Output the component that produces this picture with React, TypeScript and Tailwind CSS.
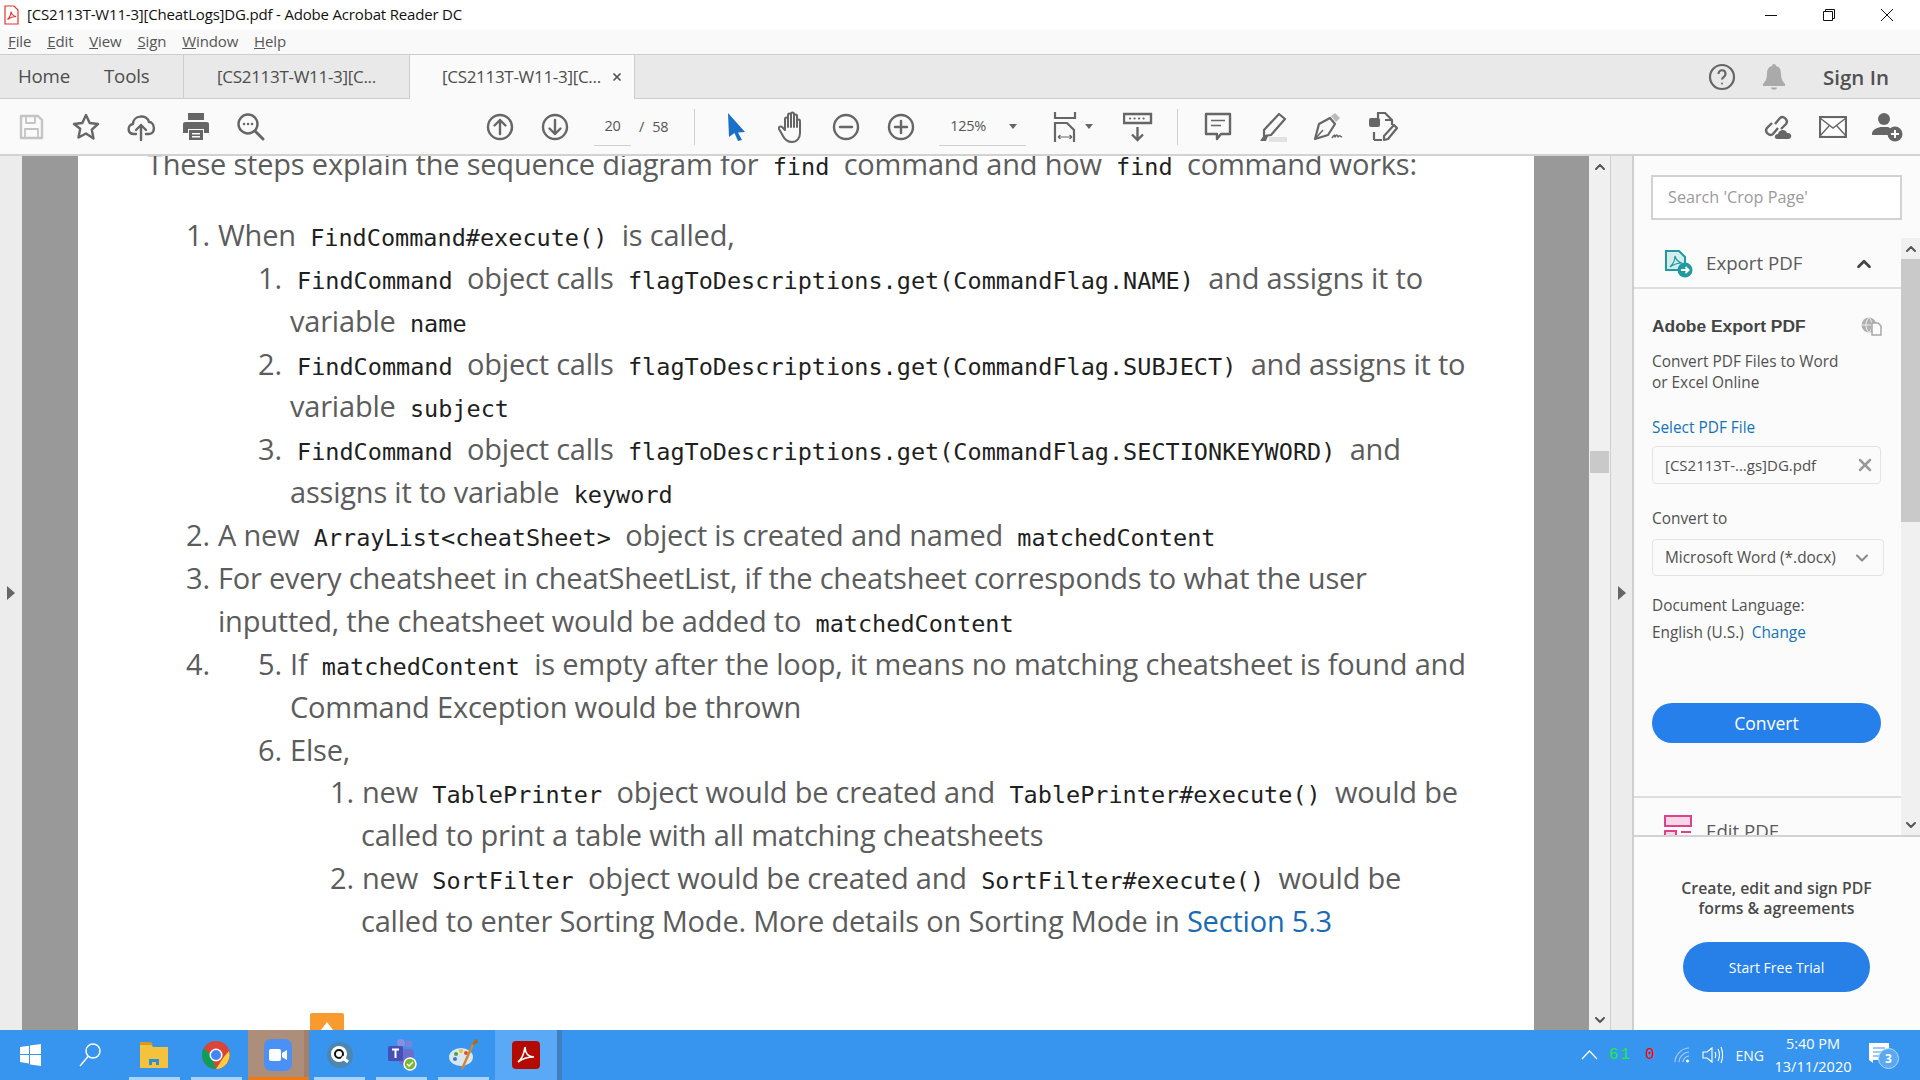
import { ReactNode } from 'react'
import { ChevronUp, ChevronDown, X } from 'lucide-react'

const ui = 'font-["Open_Sans",sans-serif]'

function C({ children }: { children: ReactNode }) {
  return <code className='mx-[7px] font-["DejaVu_Sans_Mono",monospace] text-[23.5px] tracking-normal text-[#1f1f1f]'>{children}</code>
}

function Line({ indent, children }: { indent: number; children: ReactNode }) {
  return (
    <div className="h-[42.9px] whitespace-nowrap leading-[42.9px]" style={{ paddingLeft: indent }}>
      {children}
    </div>
  )
}

function Num({ n, w }: { n: string; w: number }) {
  return (
    <span className="inline-block" style={{ width: w }}>
      {n}
    </span>
  )
}

function Tool({ children, w = 55 }: { children: ReactNode; w?: number }) {
  return (
    <div className="flex h-full shrink-0 items-center justify-center" style={{ width: w }}>
      {children}
    </div>
  )
}

function Svg({ children, s = 30, color = '#666' }: { children: ReactNode; s?: number; color?: string }) {
  return (
    <svg width={s} height={s} viewBox="0 0 30 30" fill="none" stroke={color} strokeWidth="2.4" strokeLinecap="round" strokeLinejoin="round">
      {children}
    </svg>
  )
}

function Sep() {
  return <div className="h-[36px] w-px shrink-0 bg-[#cfcfcf]" />
}

function Task({ children, active, bar = true, className = '' }: { children: ReactNode; active?: boolean; bar?: boolean; className?: string }) {
  return (
    <div className={`relative flex h-full w-[61.8px] shrink-0 items-center justify-center ${className}`}>
      {children}
      {bar && !active && <div className="absolute bottom-0 left-[5px] h-[3px] w-[51px] bg-[#a9d3f8]" />}
    </div>
  )
}

function PageText() {
  return (
    <div className={`-mt-[13px] text-[29px] tracking-[-0.2px] text-[#5c5c5c] ${ui}`}>
      <Line indent={69}>
        These steps explain the sequence diagram for <C>find</C> command and how <C>find</C> command works:
      </Line>
      <div className="h-[28px]" />
      <Line indent={108}>
        <Num n="1." w={32} />When <C>FindCommand#execute()</C> is called,
      </Line>
      <Line indent={180}>
        <Num n="1." w={32} /><C>FindCommand</C> object calls <C>flagToDescriptions.get(CommandFlag.NAME)</C> and assigns it to
      </Line>
      <Line indent={212}>
        variable <C>name</C>
      </Line>
      <Line indent={180}>
        <Num n="2." w={32} /><C>FindCommand</C> object calls <C>flagToDescriptions.get(CommandFlag.SUBJECT)</C> and assigns it to
      </Line>
      <Line indent={212}>
        variable <C>subject</C>
      </Line>
      <Line indent={180}>
        <Num n="3." w={32} /><C>FindCommand</C> object calls <C>flagToDescriptions.get(CommandFlag.SECTIONKEYWORD)</C> and
      </Line>
      <Line indent={212}>
        assigns it to variable <C>keyword</C>
      </Line>
      <Line indent={108}>
        <Num n="2." w={32} />A new <C>ArrayList&lt;cheatSheet&gt;</C> object is created and named <C>matchedContent</C>
      </Line>
      <Line indent={108}>
        <Num n="3." w={32} />For every cheatsheet in cheatSheetList, if the cheatsheet corresponds to what the user
      </Line>
      <Line indent={140}>
        inputted, the cheatsheet would be added to <C>matchedContent</C>
      </Line>
      <Line indent={108}>
        <Num n="4." w={72} /><Num n="5." w={32} />If <C>matchedContent</C> is empty after the loop, it means no matching cheatsheet is found and
      </Line>
      <Line indent={212}>Command Exception would be thrown</Line>
      <Line indent={180}>
        <Num n="6." w={32} />Else,
      </Line>
      <Line indent={252}>
        <Num n="1." w={32} />new <C>TablePrinter</C> object would be created and <C>TablePrinter#execute()</C> would be
      </Line>
      <Line indent={283}>called to print a table with all matching cheatsheets</Line>
      <Line indent={252}>
        <Num n="2." w={32} />new <C>SortFilter</C> object would be created and <C>SortFilter#execute()</C> would be
      </Line>
      <Line indent={283}>
        called to enter Sorting Mode. More details on Sorting Mode in <span className="text-[#1a6bb3]">Section 5.3</span>
      </Line>
    </div>
  )
}

function RightPanel() {
  return (
    <div className={`relative flex w-[288px] shrink-0 flex-col border-l-2 border-[#cfcfcf] bg-[#fbfbfb] text-[#505050] ${ui}`}>
      <div className="px-[16px] pt-[19px] pb-[18px]">
        <div className="ml-[1px] flex h-[45px] w-[251px] items-center border-2 border-[#d2d2d2] bg-white pl-[15px] text-[16.2px] text-[#9a9a9a]">
          Search 'Crop Page'
        </div>
      </div>
      <div className="flex h-[597px] overflow-hidden">
        <div className="w-[267px] shrink-0 overflow-hidden">
          <div className="flex h-[51px] items-center border-b-2 border-[#dedede] pt-[2px] pr-[26px] pl-[30px]">
            <svg width="29" height="28" viewBox="0 0 29 28" fill="none">
              <path d="M2 1h13l6 6v13H2z" fill="#d5ecec" stroke="#1f9a9d" strokeWidth="2" />
              <path d="M6 17c3-3 5-7 5-11 1 4 3 6 7 7-4 0-8 1-12 4z" stroke="#1f9a9d" strokeWidth="1.2" />
              <circle cx="21" cy="20" r="7.5" fill="#1f9a9d" />
              <path d="M17 20h7M21.5 17l3 3-3 3" stroke="#fff" strokeWidth="2" />
            </svg>
            <span className="ml-[13px] flex-1 text-[18.7px] text-[#5a5a5a]">Export PDF</span>
            <ChevronUp className="size-[22px] text-[#444]" strokeWidth={3} />
          </div>
          <div className="pl-[18px]">
            <div className="mt-[26px] flex h-[22px] w-[230px] items-center justify-between">
              <span className='font-["Liberation_Sans",sans-serif] text-[17.4px] font-bold text-[#444]'>Adobe Export PDF</span>
              <svg width="21" height="19" viewBox="0 0 21 19" fill="none">
                <circle cx="8" cy="8" r="7.500" fill="#b0b0b0" />
                <path d="M.5 8h15M8 .5c-4 4-4 11 0 15M8 .5c4 4 4 11 0 15" stroke="#f5f5f5" strokeWidth="0.9" />
                <path d="M11 6h6l3 3v9h-9z" fill="#fbfbfb" stroke="#a8a8a8" strokeWidth="1.5" />
              </svg>
            </div>
            <p className="mt-[14px] text-[15.4px] leading-[21px]">
              Convert PDF Files to Word
              <br />
              or Excel Online
            </p>
            <div className="mt-[24px] text-[15.4px] leading-[21px] text-[#1473b8]">Select PDF File</div>
            <div className="mt-[8px] flex h-[38px] w-[229px] items-center justify-between rounded-[4px] border border-[#e3e3e3] pr-[5px] pl-[12px] text-[15px]">
              [CS2113T-...gs]DG.pdf
              <X className="size-[20px] text-[#9a9a9a]" strokeWidth={3} />
            </div>
            <div className="mt-[24px] text-[15.4px] leading-[21px]">Convert to</div>
            <div className="mt-[10px] flex h-[37px] w-[232px] items-center justify-between rounded-[4px] border border-[#e3e3e3] pr-[11px] pl-[12px] text-[15.4px]">
              Microsoft Word (*.docx)
              <ChevronDown className="size-[20px] text-[#8a8a8a]" strokeWidth={2.5} />
            </div>
            <div className="mt-[19px] text-[15.4px] leading-[21px]">Document Language:</div>
            <div className="mt-[6px] text-[15.4px] leading-[21px]">
              English (U.S.) <span className="ml-[4px] text-[#1473b8]">Change</span>
            </div>
            <div className="mt-[60px] flex h-[40px] w-[229px] items-center justify-center rounded-full bg-[#2680eb] text-[17.6px] text-white">
              Convert
            </div>
          </div>
          <div className="mt-[53px] flex items-start border-t-2 border-[#dedede] pt-[17px] pl-[30px]">
            <svg width="28" height="26" viewBox="0 0 28 26" fill="none" stroke="#e0418f" strokeWidth="2">
              <rect x="1" y="1" width="26" height="10" fill="#f7d6e6" />
              <rect x="1" y="16" width="11" height="9" fill="#f7d6e6" />
              <path d="M17 17h10" />
            </svg>
            <span className="ml-[14px] mt-[2px] text-[18.7px] text-[#5a5a5a]">Edit PDF</span>
          </div>
        </div>
        <div className="flex w-[19px] shrink-0 flex-col bg-[#f0f0f0]">
          <div className="flex h-[21px] items-center justify-center">
            <ChevronUp className="size-[16px] text-[#555]" strokeWidth={3} />
          </div>
          <div className="h-[263px] bg-[#c9c9c9]" />
          <div className="flex-1" />
          <div className="flex h-[21px] items-center justify-center">
            <ChevronDown className="size-[16px] text-[#555]" strokeWidth={3} />
          </div>
        </div>
      </div>
      <div className="flex flex-1 flex-col items-center border-t-2 border-[#d2d2d2] bg-[#fcfcfc] pr-[1px]">
        <p className="mt-[41px] text-center text-[15.8px] leading-[20px] font-semibold text-[#4a4a4a]">
          Create, edit and sign PDF
          <br />
          forms &amp; agreements
        </p>
        <div className="mt-[24px] flex h-[50px] w-[187px] items-center justify-center rounded-full bg-[#2680e8] text-[14px] text-white">
          Start Free Trial
        </div>
      </div>
    </div>
  )
}

export default function App() {
  return (
    <div className="relative flex h-[1080px] w-[1920px] flex-col overflow-hidden bg-white">
      {/* Title bar */}
      <div className='flex h-[30px] shrink-0 items-center bg-white pb-[1px] font-["Open_Sans",sans-serif] text-[15px] text-[#111]'>
        <svg className="ml-[4px]" width="15" height="20" viewBox="0 0 15 20" fill="none">
          <path d="M1 1h9l4 4v14H1z" fill="#fff" stroke="#e5332a" strokeWidth="1.2" />
          <path d="M3.500 14.500c2-2 3.500-5 3.500-8 .5 3 2.500 4.500 5 5-3 0-6 1-8.500 3z" stroke="#e5332a" strokeWidth="1.1" />
        </svg>
        <span className="ml-[8px] tracking-[-0.18px]">[CS2113T-W11-3][CheatLogs]DG.pdf - Adobe Acrobat Reader DC</span>
        <div className="ml-auto flex h-full pr-[4px]">
          <div className="flex w-[58px] items-center justify-center">
            <svg width="12" height="12" viewBox="0 0 12 12" stroke="#111" fill="none"><path d="M0 6.500h12" /></svg>
          </div>
          <div className="flex w-[58px] items-center justify-center">
            <svg width="12" height="12" viewBox="0 0 12 12" stroke="#111" fill="none"><path d="M.5 2.500h9v9h-9zM2.500 2.500v-2h9v9h-2" /></svg>
          </div>
          <div className="flex w-[58px] items-center justify-center">
            <svg width="14" height="14" viewBox="0 0 14 14" stroke="#111" fill="none"><path d="M1 1l12 12M13 1L1 13" /></svg>
          </div>
        </div>
      </div>
      {/* Menu bar */}
      <div className={`flex h-[24px] shrink-0 items-center gap-[15.8px] bg-[#f9f9f9] pb-[1px] pl-[8px] text-[15px] tracking-[-0.1px] text-[#555] ${ui}`}>
        <span><u>F</u>ile</span>
        <span><u>E</u>dit</span>
        <span><u>V</u>iew</span>
        <span><u>S</u>ign</span>
        <span><u>W</u>indow</span>
        <span><u>H</u>elp</span>
      </div>
      {/* Tab bar */}
      <div className={`flex h-[45px] shrink-0 items-stretch border-y border-[#cdcdcd] bg-[#e9e9e9] text-[#4d4d4d] ${ui}`}>
        <div className="flex w-[183px] items-center gap-[34px] pl-[18px] text-[18.7px] tracking-[-0.2px]">
          <span>Home</span>
          <span>Tools</span>
        </div>
        <div className="flex w-[226px] items-center justify-center border-l border-[#cdcdcd] text-[17px] tracking-[-0.3px]">[CS2113T-W11-3][C...</div>
        <div className="-mb-px flex w-[226px] items-center justify-between border-x border-[#cdcdcd] bg-[#fafafa] pr-[11px] pl-[32px] text-[17px] tracking-[-0.3px]">
          [CS2113T-W11-3][C...
          <X className="size-[12px] text-[#555]" strokeWidth={3.5} />
        </div>
        <div className="ml-auto flex items-center">
          <svg width="28" height="28" viewBox="0 0 28 28" fill="none" stroke="#666" strokeWidth="2.200">
            <circle cx="14" cy="14" r="12" />
            <path d="M10.500 11c0-5 7-5 7 0 0 3-3.500 3-3.500 5.500" />
            <circle cx="14" cy="20.500" r="1" fill="#666" stroke="none" />
          </svg>
          <svg className="ml-[27px]" width="22" height="26" viewBox="0 0 22 26" fill="#aaa">
            <path d="M11 0c1.500 0 2 1 2 2 4 1 5 4 5 8 0 5 2 8 4 10v2H0v-2c2-2 4-5 4-10 0-4 1-7 5-8 0-1 .5-2 2-2zM8 23.500h6c0 3-6 3-6 0z" />
          </svg>
          <span className="mt-[2px] mr-[31px] ml-[38px] text-[20.5px] font-semibold text-[#505050]">Sign In</span>
        </div>
      </div>
      {/* Toolbar */}
      <div className={`flex h-[57px] shrink-0 items-center border-b-2 border-[#d2d2d2] bg-[#fafafa] text-[#555] ${ui}`}>
        <div className="flex h-full pl-[3px]">
          <Tool>
            <Svg color="#c4c4c4">
              <path d="M5 4h17l4 4v18H5z" />
              <path d="M10 4v7h9V4M9 26v-9h13v9" strokeWidth="1.800" />
            </Svg>
          </Tool>
          <Tool>
            <Svg>
              <path d="M15 3l3.700 8 8.300 1-6.200 5.700 1.700 8.800L15 21.500l-7.500 4 1.700-8.800L3 12l8.300-1z" />
            </Svg>
          </Tool>
          <Tool>
            <Svg>
              <path d="M10 22H8c-7 0-7-9-1-10 0-9 14-10 16-2 6 0 7 12 0 12h-3" />
              <path d="M15 28V13M10 18l5-5 5 5" />
            </Svg>
          </Tool>
          <Tool>
            <svg width="26" height="27" viewBox="0 0 26 27" fill="#666">
              <path d="M5 0h16v7H5z" />
              <path d="M2 9h22a2 2 0 012 2v9h-5v-4H5v4H0v-9a2 2 0 012-2z" />
              <path d="M6 17h14v10H6zM9 20v1.500h8V20zM9 23v1.500h8V23z" fillRule="evenodd" />
            </svg>
          </Tool>
          <Tool>
            <Svg>
              <circle cx="12" cy="12" r="9.500" />
              <path d="M19 19l8 8" strokeWidth="3" />
              <path d="M8 12h.1M12 12h.1M16 12h.1" />
            </Svg>
          </Tool>
        </div>
        <div className="ml-[194px] flex h-full">
          <Tool>
            <Svg>
              <circle cx="15" cy="15" r="12" />
              <path d="M15 22V8M9.500 13.500L15 8l5.500 5.500" />
            </Svg>
          </Tool>
          <Tool>
            <Svg>
              <circle cx="15" cy="15" r="12" />
              <path d="M15 8v14M9.500 16.500L15 22l5.500-5.500" />
            </Svg>
          </Tool>
        </div>
        <div className="ml-[12px] flex h-[38px] w-[37px] items-center justify-center border-b border-[#cfcfcf] text-[14.5px] tracking-[-0.3px]">20</div>
        <span className="ml-[8px] text-[14.5px]">/</span>
        <span className="ml-[8px] text-[14.5px] tracking-[-0.3px]">58</span>
        <div className="ml-[26px]"><Sep /></div>
        <div className="ml-[13px] flex h-full">
          <Tool>
            <svg width="20" height="28" viewBox="0 0 20 28" fill="#1a70c8">
              <path d="M2 0l17 19-7 .5 4 7.500-4 1-3.500-8L3 24z" />
            </svg>
          </Tool>
          <Tool>
            <svg className="ml-[3px]" width="28" height="32" viewBox="0 0 28 32" fill="none" stroke="#666" strokeWidth="2" strokeLinejoin="round" strokeLinecap="round">
              <path d="M7 19V8c0-2 3-2 3 0v8V4c0-2 3-2 3 0v12V3c0-2 3-2 3 0v13V5c0-2 3-2 3 0v11-6c0-2 3-2 3 0v12c0 5-3 9-8 9-5 0-7-2-9-6l-4-7c-1-2 2-4 4-1z" />
            </svg>
          </Tool>
          <Tool>
            <Svg>
              <circle cx="15" cy="15" r="12" />
              <path d="M9 15h12" />
            </Svg>
          </Tool>
          <Tool>
            <Svg>
              <circle cx="15" cy="15" r="12" />
              <path d="M9 15h12M15 9v12" />
            </Svg>
          </Tool>
        </div>
        <div className="ml-[11px] flex h-[38px] w-[87px] items-center justify-between border-b border-[#cfcfcf] pr-[9px] pl-[11px] text-[14.5px] tracking-[-0.3px]">
          125%
          <span className="h-0 w-0 border-x-[4px] border-t-[5px] border-x-transparent border-t-[#666]" />
        </div>
        <div className="ml-[27px] flex h-full items-center gap-[6px]">
          <svg width="26" height="30" viewBox="0 0 26 30" fill="none" stroke="#666" strokeWidth="2.200">
            <path d="M2 0v6h20V0" />
            <path d="M2 30V11h12l7 7v12" />
            <path d="M5 25h14M5 25l2.500-2M5 25l2.500 2M19 25l-2.500-2M19 25l-2.500 2" strokeWidth="1.200" />
          </svg>
          <span className="h-0 w-0 border-x-[4px] border-t-[5px] border-x-transparent border-t-[#666]" />
        </div>
        <div className="ml-[17px] flex h-full">
          <Tool>
            <svg width="30" height="30" viewBox="0 0 30 30" fill="none">
              <path d="M1 2h27v9H1z" stroke="#666" strokeWidth="2.400" fill="#fafafa" />
              <path d="M7 6.500h.1M11.500 6.500h.1M16 6.500h.1M20.500 6.500h.1" stroke="#666" strokeWidth="2.200" strokeLinecap="round" />
              <path d="M14.500 15v13M9 22.500l5.500 5.500 5.500-5.500" stroke="#666" strokeWidth="2.400" />
            </svg>
          </Tool>
        </div>
        <div className="ml-[12px]"><Sep /></div>
        <div className="ml-[12px] flex h-full">
          <Tool>
            <svg width="28" height="30" viewBox="0 0 28 30" fill="none" stroke="#666" strokeWidth="2.400" strokeLinejoin="round">
              <path d="M2 2h24v20H17l-4 5v-5H2z" />
              <path d="M7 8.500h14M7 13.500h10" strokeWidth="1.500" />
            </svg>
          </Tool>
          <Tool>
            <svg width="32" height="30" viewBox="0 0 32 30" fill="none">
              <path d="M22 2l6 5-14 16-7 1 0-6z" stroke="#666" strokeWidth="2.200" strokeLinejoin="round" />
              <path d="M3 29l4-6 4 1-2 5z" fill="#666" />
              <path d="M12 25h18v5H12z" fill="#e2e2e2" />
            </svg>
          </Tool>
          <Tool>
            <svg width="32" height="30" viewBox="0 0 32 30" fill="none" stroke="#666" strokeWidth="2.200" strokeLinejoin="round">
              <path d="M7 12L18 6l5 6-7 11-13 4z" />
              <path d="M3 27l8-9" strokeWidth="1.500" />
              <path d="M19 4l4-3 5 5-4 4z" fill="#bbb" stroke="none" />
              <path d="M20 26c2-3 3-4 3-1 2-3 2-2 3 0 1-2 2-1 4 0" strokeWidth="1.500" />
            </svg>
          </Tool>
          <Tool>
            <svg width="30" height="30" viewBox="0 0 30 30" fill="none" stroke="#666" strokeWidth="2.200" strokeLinejoin="round">
              <path d="M9 1h8l7 7v5M10 8V1M6 28v-8M6 28h8M17 8h7" />
              <rect x="1" y="6" width="11" height="9" rx="2" fill="#666" stroke="none" />
              <path d="M26 13l3 3-9 11-4 1 0-4z" />
            </svg>
          </Tool>
        </div>
        <div className="ml-auto flex h-full pr-[5px]">
          <Tool>
            <svg width="32" height="30" viewBox="0 0 32 30" fill="none" stroke="#666" strokeWidth="2.400">
              <path d="M13 12l5-6c3-3 9 2 6 6l-5 5M16 16l-5 6c-3 3-9-2-6-6l5-5" />
              <path d="M15 27c-3 0-3-5 1-5 1-5 8-5 9-1 5-1 6 6 1 6z" fill="#666" stroke="none" />
            </svg>
          </Tool>
          <Tool>
            <svg width="28" height="22" viewBox="0 0 28 22" fill="#fff" stroke="#666" strokeWidth="2.200">
              <rect x="1" y="1" width="26" height="20" />
              <path d="M1 2l13 10 13-10M1 20l9-10M27 20l-9-10" fill="none" strokeWidth="1.400" />
            </svg>
          </Tool>
          <Tool>
            <svg width="31" height="30" viewBox="0 0 31 30">
              <circle cx="12" cy="7" r="6" fill="#666" />
              <path d="M0 22c0-5 6-6 8-7h8c2 1 4 2 5 3-3 1-5 3-5 5H0z" fill="#666" />
              <circle cx="23" cy="22" r="7.500" fill="#666" />
              <path d="M19 22h8M23 18v8" stroke="#fff" strokeWidth="2" />
            </svg>
          </Tool>
        </div>
      </div>
      {/* Main area */}
      <div className="flex h-[874px] shrink-0 overflow-hidden">
        <div className="flex w-[22px] shrink-0 items-center bg-[#ececec] pl-[7px]">
          <span className="h-0 w-0 border-y-[7px] border-l-[8px] border-y-transparent border-l-[#666]" />
        </div>
        <div className="w-[56px] shrink-0 bg-[#999]" />
        <div className="w-[1456px] shrink-0 overflow-hidden bg-white">
          <PageText />
        </div>
        <div className="w-[55px] shrink-0 bg-[#999]" />
        <div className="flex w-[22px] shrink-0 flex-col items-center border-r border-[#cfcfcf] bg-[#f0f0f0]">
          <div className="flex h-[21px] items-center">
            <ChevronUp className="size-[16px] text-[#555]" strokeWidth={3} />
          </div>
          <div className="mt-[274px] h-[22px] w-[19px] bg-[#c9c9c9]" />
          <div className="mt-auto flex h-[21px] items-center">
            <ChevronDown className="size-[16px] text-[#555]" strokeWidth={3} />
          </div>
        </div>
        <div className="flex w-[21px] shrink-0 items-center justify-center bg-[#ececec]">
          <span className="h-0 w-0 border-y-[7px] border-l-[8px] border-y-transparent border-l-[#666]" />
        </div>
        <RightPanel />
      </div>
      {/* Taskbar */}
      <div className={`flex h-[50px] shrink-0 items-stretch bg-[#3794ef] text-white ${ui}`}>
        <div className="flex w-[60px] shrink-0 items-center justify-center">
          <svg width="21" height="22" viewBox="0 0 21 22" fill="#fff"><path d="M0 3l9-1.300V10H0zM10 1.500L21 0v10H10zM0 11h9v8.500L0 18zM10 11h11v11l-11-1.600z" /></svg>
        </div>
        <div className="flex w-[64px] shrink-0 items-center justify-center pr-[5px]">
          <svg width="22" height="24" viewBox="0 0 22 24" fill="none" stroke="#fff" strokeWidth="1.500"><circle cx="14" cy="8" r="7" /><path d="M9 13.500L1 23" /></svg>
        </div>
        <Task>
          <svg className="mr-[2px]" width="28" height="26" viewBox="0 0 28 26"><path d="M0 2h11l2 3h15v21H0z" fill="#f5c33b" /><path d="M0 0h11l2 3H0z" fill="#d99a1c" /><path d="M9 17h10v6H9z" fill="#2d8fd8" /><path d="M12 20h4v3h-4z" fill="#f5c33b" /></svg>
        </Task>
        <Task>
          <svg className="mr-[1px]" width="28" height="28" viewBox="0 0 28 28">
            <circle cx="14" cy="14" r="14" fill="#db4437" />
            <path d="M14 28a14 14 0 01-12-7l6-10 6 17z" fill="#0f9d58" />
            <path d="M2 21A14 14 0 012 7l7 7z" fill="#0f9d58" />
            <path d="M14 28l7-11 6-7a14 14 0 01-13 18z" fill="#ffcd40" />
            <circle cx="14" cy="14" r="6.500" fill="#fff" />
            <circle cx="14" cy="14" r="5" fill="#4285f4" />
          </svg>
        </Task>
        <Task active className="bg-[#ad8e7b]">
          <div className="flex h-[32px] w-[28px] items-center justify-center rounded-[7px] bg-[#4a90f5]">
            <svg width="18" height="12" viewBox="0 0 18 12" fill="#fff"><rect width="12" height="12" rx="2" /><path d="M13 4l5-3v10l-5-3z" /></svg>
          </div>
          <div className="absolute top-0 right-0 h-full w-[5px] bg-[#a57f68]" />
          <div className="absolute bottom-0 left-0 h-[3px] w-full bg-[#f07a12]" />
        </Task>
        <Task>
          <div className="flex size-[26px] items-center justify-center rounded-full bg-[#4e86ad]">
            <svg width="20" height="20" viewBox="0 0 20 20" fill="none"><circle cx="9" cy="9" r="6.500" stroke="#fff" strokeWidth="3" fill="#111" /><path d="M12 12l6 5" stroke="#fff" strokeWidth="3" /><circle cx="9" cy="9" r="3" fill="#fff" /></svg>
          </div>
        </Task>
        <Task>
          <svg width="32" height="32" viewBox="0 0 32 32">
            <circle cx="23" cy="5" r="3.500" fill="#7b83d8" />
            <circle cx="15" cy="4" r="4" fill="#8a8fe0" />
            <rect x="13" y="10" width="15" height="16" rx="4" fill="#6a6fc9" />
            <rect x="2" y="7" width="15" height="15" rx="1.500" fill="#464eb8" />
            <path d="M6 10.500h7M9.500 10.500V19" stroke="#fff" strokeWidth="2" />
            <circle cx="24" cy="25" r="6" fill="#7cb82f" stroke="#fff" strokeWidth="1.500" />
            <path d="M21 25l2 2 4-4" stroke="#fff" strokeWidth="1.500" fill="none" />
          </svg>
        </Task>
        <Task>
          <svg width="30" height="32" viewBox="0 0 30 32">
            <ellipse cx="12" cy="18" rx="12" ry="9" fill="#dbe7ee" />
            <circle cx="7" cy="15" r="2" fill="#4aa34a" />
            <circle cx="12" cy="12" r="2" fill="#e8c23a" />
            <circle cx="17" cy="14" r="2" fill="#d9542b" />
            <circle cx="6" cy="20" r="2" fill="#3a7bd5" />
            <path d="M13 30L25 3" stroke="#c98b3a" strokeWidth="2.500" />
            <path d="M24 5l3-4 1 2z" fill="#a66b2a" stroke="#a66b2a" strokeWidth="2" />
          </svg>
        </Task>
        <Task active className="bg-[#5aa9f6]">
          <div className="flex size-[28px] items-center justify-center rounded-[4px] bg-[#b30b00]">
            <svg width="20" height="20" viewBox="0 0 20 20" fill="none" stroke="#fff" strokeWidth="1.700">
              <path d="M2 17c4-3 6-8 7-15 0 6 3 10 9 10-6 0-11 1-16 5z" />
            </svg>
          </div>
        </Task>
        <div className="w-[5px] shrink-0 bg-[#3f7fbf]" />
        <div className="ml-auto flex items-center">
          <svg width="17" height="10" viewBox="0 0 17 10" fill="none" stroke="#fff" strokeWidth="1.200"><path d="M1 9l7.500-8L16 9" /></svg>
          <span className='ml-[11px] w-[22px] font-["Liberation_Mono",monospace] text-[16px] tracking-[2px] text-[#1bef3c]'>61</span>
          <span className='ml-[14px] font-["Liberation_Mono",monospace] text-[16px] text-[#f00]'>0</span>
          <svg className="ml-[19px]" width="17" height="16" viewBox="0 0 17 16" fill="none" stroke="#a6cff7" strokeWidth="1.200"><path d="M1 15C1 8 8 1 15 1M5 15c0-5 5-10 10-10M9 15c0-3 3-6 6-6" /><circle cx="13.500" cy="14" r="1.500" fill="#fff" stroke="none" /></svg>
          <svg className="ml-[11px]" width="21" height="20" viewBox="0 0 21 20" fill="none" stroke="#fff" strokeWidth="1.100"><path d="M1 7h4l5-4v14l-5-4H1zM13 7c1 2 1 4 0 6M16 4c2 4 2 8 0 12M19 2c2 5 2 11 0 16" /></svg>
          <span className="ml-[13px] text-[14px]">ENG</span>
          <div className="ml-[8px] w-[82px] text-center text-[14.5px] leading-[23px]">
            <div>5:40 PM</div>
            <div>13/11/2020</div>
          </div>
          <div className="relative mr-[21px] ml-[15px] h-[30px] w-[30px]">
            <svg className="absolute top-[3px] left-0" width="21" height="21" viewBox="0 0 21 21" fill="#fff"><path d="M0 0h20v17H4v3l-4-3z" /><path d="M4 5h12M4 9h12M4 13h9" stroke="#3794ef" strokeWidth="1" /></svg>
            <div className="absolute top-[8px] left-[9px] flex size-[21px] items-center justify-center rounded-full border border-[#bcdcf9] bg-[#5ba8f3] text-[12px] font-bold">3</div>
          </div>
        </div>
      </div>
      {/* Notification tab peeking over the taskbar */}
      <div className="absolute top-[1013px] left-[310px] flex h-[17px] w-[34px] items-end justify-center rounded-t-[2px] bg-[#f89a2e]">
        <span className="h-0 w-0 border-x-[6px] border-b-[8px] border-x-transparent border-b-white" />
      </div>
    </div>
  )
}
